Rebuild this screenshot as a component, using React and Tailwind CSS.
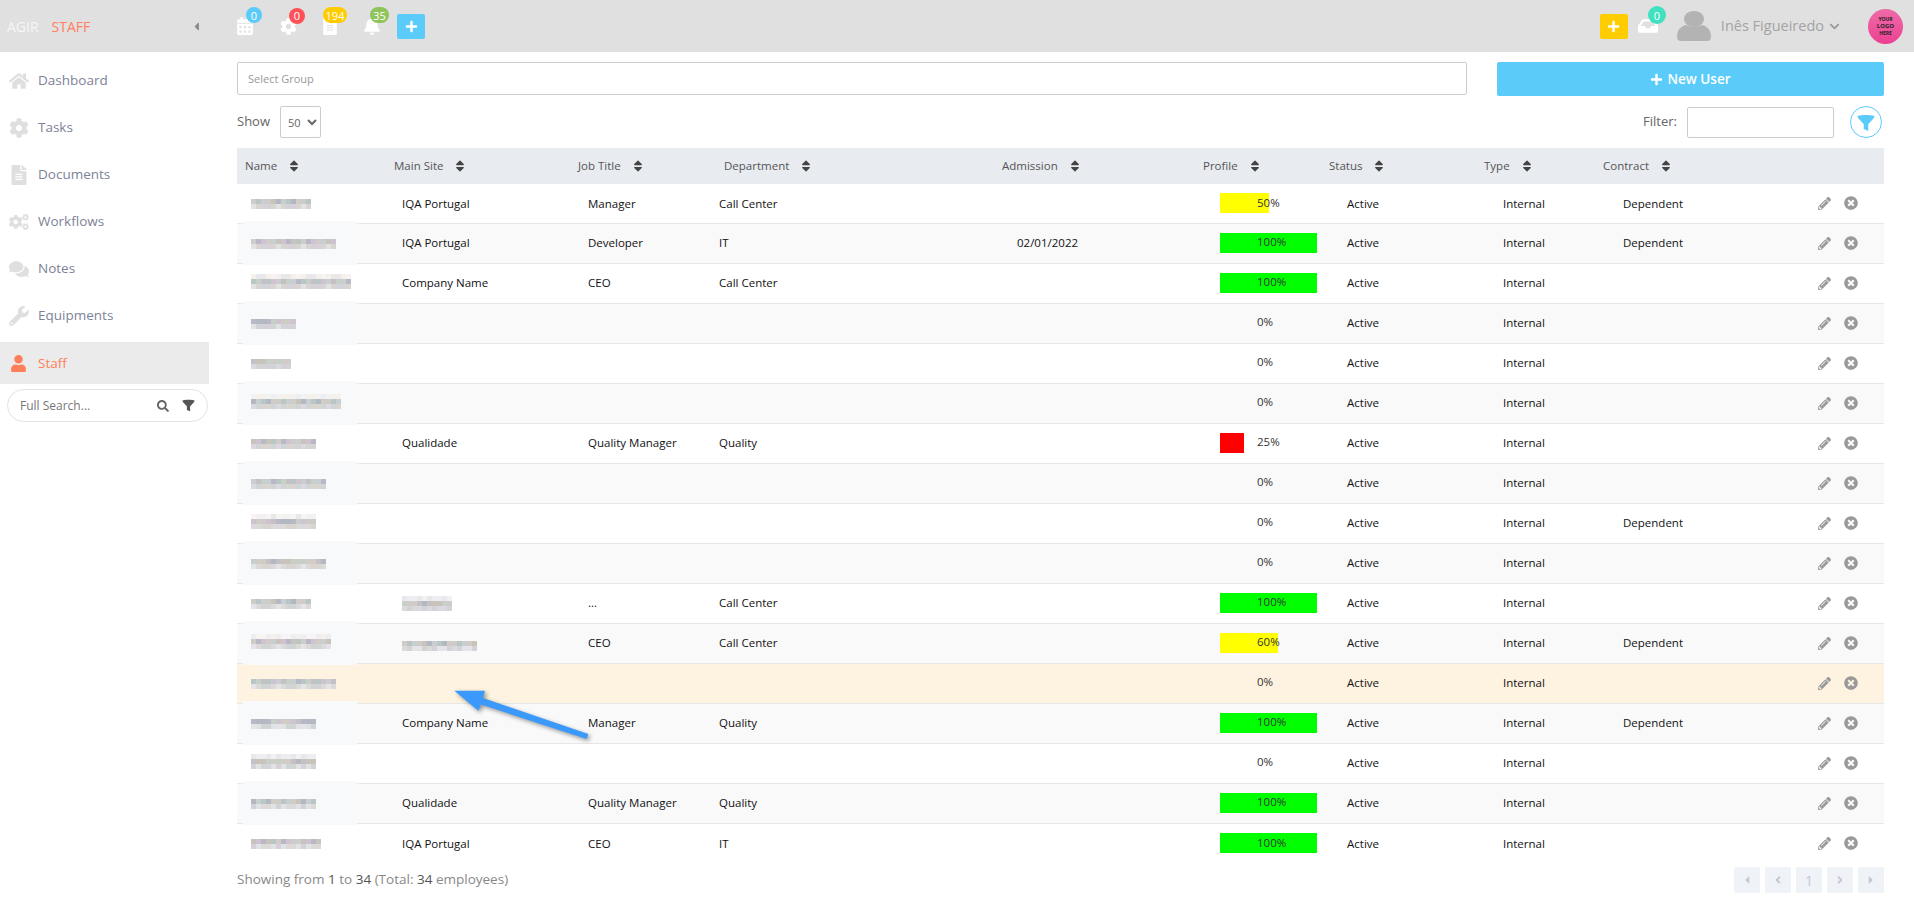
import {
    FaHome, FaCog, FaFileAlt, FaCogs, FaComments, FaWrench, FaUser, FaSearch,
    FaCaretLeft, FaCaretRight, FaAngleLeft, FaAngleRight, FaCalendarAlt, FaBell, FaPlus,
    FaInbox, FaChevronDown, FaSort, FaPencilAlt, FaTimesCircle,
} from 'react-icons/fa';

const font = { fontFamily: '"Open Sans", "Noto Sans", sans-serif' };

const navItems = [
    { label: 'Dashboard', icon: FaHome },
    { label: 'Tasks', icon: FaCog },
    { label: 'Documents', icon: FaFileAlt },
    { label: 'Workflows', icon: FaCogs },
    { label: 'Notes', icon: FaComments },
    { label: 'Equipments', icon: FaWrench },
];

const columns = [
    { label: 'Name', col: 'w-[149px]' },
    { label: 'Main Site', col: 'w-[184px]' },
    { label: 'Job Title', col: 'w-[146px]' },
    { label: 'Department', col: 'w-[278px]' },
    { label: 'Admission', col: 'w-[201px]' },
    { label: 'Profile', col: 'w-[126px]' },
    { label: 'Status', col: 'w-[155px]' },
    { label: 'Type', col: 'w-[119px]' },
    { label: 'Contract', col: 'w-[205px]' },
    { label: '', col: 'w-[84px]' },
];

const rows = [
    { name: 60, site: 'IQA Portugal', job: 'Manager', dept: 'Call Center', profile: 50, contract: 'Dependent' },
    { name: 85, site: 'IQA Portugal', job: 'Developer', dept: 'IT', date: '02/01/2022', profile: 100, contract: 'Dependent' },
    { name: 100, site: 'Company Name', job: 'CEO', dept: 'Call Center', profile: 100 },
    { name: 45, profile: 0 },
    { name: 40, profile: 0 },
    { name: 90, profile: 0 },
    { name: 65, site: 'Qualidade', job: 'Quality Manager', dept: 'Quality', profile: 25 },
    { name: 75, profile: 0 },
    { name: 65, profile: 0, contract: 'Dependent' },
    { name: 75, profile: 0 },
    { name: 60, blurSite: 50, job: '...', dept: 'Call Center', profile: 100 },
    { name: 80, blurSite: 75, job: 'CEO', dept: 'Call Center', profile: 60, contract: 'Dependent' },
    { name: 85, profile: 0, highlight: true },
    { name: 65, site: 'Company Name', job: 'Manager', dept: 'Quality', profile: 100, contract: 'Dependent' },
    { name: 65, profile: 0 },
    { name: 65, site: 'Qualidade', job: 'Quality Manager', dept: 'Quality', profile: 100 },
    { name: 70, site: 'IQA Portugal', job: 'CEO', dept: 'IT', profile: 100 },
];

const midTones = ['#cfcbc6', '#c4c0c4', '#b9b8c6', '#c9cfd0', '#d2ccc8', '#b4b8c2', '#c6cfc8', '#cfc3d2', '#b8c6c6', '#c8c4bc'];
const lowTones = ['#dcdad8', '#d4d2d8', '#e0e2e4', '#d8d4d0', '#dcd8e0', '#d0d4d4', '#e4e4e8'];
const topTones = ['#f6f0ea', '#eceef2', '#f2f2f2', '#e8e8ea', '#f8f4f4'];

// pixelated stand-in for a blurred out name
function Mosaic({ width, seed }) {
    const cols = Math.round(width / 5);
    const pick = (list, i, k) => list[(i * 7 + seed * 13 + k * 3 + ((i * i + seed) % 5)) % list.length];
    return (
        <svg width={width} height={15} className="block" shapeRendering="crispEdges">
            {Array.from({ length: cols }).map((_, i) => (
                <g key={i}>
                    {(i * 3 + seed) % 3 === 0 && <rect x={i * 5} y={0} width={5} height={5} fill={pick(topTones, i, 1)} />}
                    <rect x={i * 5} y={5} width={5} height={5} fill={pick(midTones, i, 2)} />
                    <rect x={i * 5} y={10} width={5} height={5} fill={pick(lowTones, i, 3)} />
                </g>
            ))}
        </svg>
    );
}

function Funnel({ className }) {
    return (
        <svg viewBox="0 0 16 16" className={className} fill="currentColor">
            <path d="M0.5 2.2C0.5 0.4 15.5 0.4 15.5 2.2C15.5 3 15 3.6 14.4 4.2L10 9V15.2L6 13.4V9L1.6 4.2C1 3.6 0.5 3 0.5 2.2Z" />
        </svg>
    );
}

function Avatar() {
    return (
        <svg width="34" height="30" viewBox="0 0 34 30" fill="#b3b3b3">
            <ellipse cx="17" cy="8" rx="10" ry="8" />
            <path d="M0 26C0 18 5 14.5 9.5 14C12 16 22 16 24.5 14C29 14.5 34 18 34 26C34 28.5 32.5 30 30 30H4C1.500 30 0 28.500 0 26Z" />
        </svg>
    );
}

function Badge({ value, color, className }) {
    return (
        <span className={`absolute -top-[10px] flex h-4 items-center justify-center rounded-full text-[11px] leading-none text-white ${color} ${className}`}>
            {value}
        </span>
    );
}

function TopIcon({ icon: Icon, size, badge, color, badgeClass, wrap }) {
    return (
        <div className={`relative flex items-center ${wrap}`}>
            <Icon className="text-white" style={{ fontSize: size }} />
            <Badge value={badge} color={color} className={badgeClass} />
        </div>
    );
}

function SquarePlus({ color }) {
    return (
        <button className={`flex h-[25px] w-[28px] items-center justify-center rounded-[2px] text-white ${color}`}>
            <FaPlus className="text-[13px]" />
        </button>
    );
}

function ProfileBar({ value }) {
    const color = value === 100 ? 'bg-[#00ff00]' : value >= 50 ? 'bg-[#ffff00]' : 'bg-[#ff0000]';
    return (
        <div className="grid w-[97px] grid-cols-1 items-center">
            {value > 0 && <div className={`col-start-1 row-start-1 h-5 ${color}`} style={{ width: `${value * 0.97}px` }}></div>}
            <span className="col-start-1 row-start-1 -mt-[2px] pl-[37px] text-[#333]">{value}%</span>
        </div>
    );
}

function Pager({ children }) {
    return <div className="flex h-[26px] w-[26px] items-center justify-center rounded-[2px] bg-[#eff2f6] text-[#c2c7d0]">{children}</div>;
}

export default function App() {
    return (
        <div className="relative h-[897px] overflow-hidden bg-white" style={font}>
            {/* Top bar */}
            <header className="flex h-[52px] items-center bg-[#e0e0e0]">
                <div className="flex w-[209px] items-center pl-[7px] pr-[6px] text-[14px]">
                    <span className="text-[#f7f7f7]">AGIR</span>
                    <span className="ml-[13px] text-[#ff7f60]">STAFF</span>
                    <FaCaretLeft className="ml-auto text-[13px] text-[#8a8a8a]" />
                </div>
                <div className="flex items-center pl-[27px]">
                    <TopIcon icon={FaCalendarAlt} size={18} badge="0" color="bg-[#5bcbf9] w-4" badgeClass="left-[10px]" wrap="w-[44px]" />
                    <TopIcon icon={FaCog} size={17} badge="0" color="bg-[#ff5257] w-4" badgeClass="left-[9px]" wrap="w-[41px]" />
                    <TopIcon icon={FaFileAlt} size={18} badge="194" color="bg-[#ffcc00] w-6" badgeClass="left-[2px]" wrap="w-[42px]" />
                    <TopIcon icon={FaBell} size={18} badge="35" color="bg-[#8fc45a] w-[19px]" badgeClass="left-[7px]" wrap="w-[34px]" />
                    <SquarePlus color="bg-[#5bcbf9]" />
                </div>
                <div className="ml-auto flex items-center pr-[11px]">
                    <SquarePlus color="bg-[#ffcc00]" />
                    <TopIcon icon={FaInbox} size={20} badge="0" color="bg-[#40e0c0] w-[18px] h-[18px]" badgeClass="left-[10px]" wrap="ml-[10px] w-[39px]" />
                    <Avatar />
                    <span className="ml-[10px] text-[14.5px] text-[#a3a3a3]">Inês Figueiredo</span>
                    <FaChevronDown className="ml-[5px] text-[11px] text-[#999]" />
                    <div className="ml-[28px] flex h-[35px] w-[35px] flex-col items-center justify-center rounded-full bg-gradient-to-b from-[#ee6aa8] to-[#ec3f93] text-[5px] font-bold leading-[7px] text-[#222]">
                        <span>YOUR</span>
                        <span className="text-[6px]">LOGO</span>
                        <span>HERE</span>
                    </div>
                </div>
            </header>

            <div className="flex">
                {/* Sidebar */}
                <aside className="w-[209px] shrink-0 pt-[5px]">
                    {navItems.map((item) => (
                        <div key={item.label} className="flex h-[47px] items-center text-[13.5px] text-[#7d8298]">
                            <div className="flex w-[38px] justify-center pr-[1px]">
                                <item.icon className="text-[20px] text-[#dfdfdf]" />
                            </div>
                            <span>{item.label}</span>
                        </div>
                    ))}
                    <div className="mt-[3px] flex h-[42px] items-center bg-[#ebebeb] text-[13.5px] text-[#ff7f5c]">
                        <div className="flex w-[38px] justify-center pr-[2px]">
                            <FaUser className="text-[17px]" />
                        </div>
                        <span>Staff</span>
                    </div>
                    <div className="ml-[7px] mt-[5px] flex h-[33px] w-[201px] items-center rounded-full border border-[#e2e2e2] pl-[12px] pr-[12px] text-[12px] text-[#777]">
                        <span>Full Search...</span>
                        <FaSearch className="ml-auto text-[12px] text-[#666]" />
                        <Funnel className="ml-[13px] h-[13px] w-[13px] text-[#555]" />
                    </div>
                </aside>

                {/* Main content */}
                <main className="min-w-0 flex-1 pl-[28px] pr-[30px] pt-[10px]">
                    <div className="flex items-start">
                        <input
                            placeholder="Select Group"
                            className="h-[33px] w-[1230px] rounded-[2px] border border-[#cccccc] px-[10px] text-[11px] placeholder:text-[#999]"
                        />
                        <button className="ml-auto flex h-[34px] w-[387px] items-center justify-center gap-[4px] rounded-[2px] bg-[#5bcbf9] text-[13.5px] font-semibold text-white">
                            <FaPlus className="text-[13px]" />
                            New User
                        </button>
                    </div>

                    <div className="mt-[10px] flex h-[32px] items-center text-[13px] text-[#666]">
                        <span>Show</span>
                        <select className="ml-[10px] h-[32px] w-[41px] rounded-[2px] border border-[#cccccc] pl-[3px] text-[11px] text-[#666]">
                            <option>50</option>
                        </select>
                        <span className="ml-auto">Filter:</span>
                        <input className="ml-[10px] h-[31px] w-[147px] rounded-[2px] border border-[#cccccc]" />
                        <div className="ml-[16px] mr-[2px] flex h-[32px] w-[32px] items-center justify-center rounded-full border border-[#5bcbf9] text-[#5bcbf9]">
                            <Funnel className="mt-[1px] h-[18px] w-[18px]" />
                        </div>
                    </div>

                    <table className="mt-[10px] w-full table-fixed border-collapse text-[11.5px] text-[#111]">
                        <colgroup>
                            {columns.map((c, i) => <col key={i} className={c.col} />)}
                        </colgroup>
                        <thead>
                            <tr className="h-[36px] bg-[#e8ebf0] text-[#555]">
                                {columns.map((c, i) => (
                                    <th key={i} className="pl-2 text-left font-normal">
                                        {c.label && (
                                            <div className="flex items-center gap-[10px]">
                                                <span>{c.label}</span>
                                                <FaSort className="text-[14px] text-[#444]" />
                                            </div>
                                        )}
                                    </th>
                                ))}
                            </tr>
                        </thead>
                        <tbody>
                            {rows.map((r, i) => (
                                <tr
                                    key={i}
                                    className={`${i > 0 ? 'h-10 border-t border-[#e7e7e7]' : 'h-[39px]'} ${r.highlight ? 'bg-[#fef3e0]' : i % 2 === 1 ? 'bg-[#f9f9f9]' : 'bg-white'}`}
                                >
                                    <td className="relative pl-[14px]">
                                        {i % 2 === 1 && !r.highlight && (
                                            <div className="absolute -bottom-[2px] -top-[3px] left-[6px] w-[114px] bg-[#f8f9fb]"></div>
                                        )}
                                        <div className="relative -mt-[3px]"><Mosaic width={r.name} seed={i + 1} /></div>
                                    </td>
                                    <td className="pl-[16px]">
                                        {r.blurSite ? <Mosaic width={r.blurSite} seed={i + 20} /> : r.site}
                                    </td>
                                    <td className="pl-[18px]">{r.job}</td>
                                    <td className="pl-[3px]">{r.dept}</td>
                                    <td className="pl-[23px]">{r.date}</td>
                                    <td className="pl-[25px]"><ProfileBar value={r.profile} /></td>
                                    <td className="pl-[26px]">Active</td>
                                    <td className="pl-[27px]">Internal</td>
                                    <td className="pl-[28px]">{r.contract}</td>
                                    <td className="pl-[18px]">
                                        <div className="flex items-center gap-[13px] text-[#999]">
                                            <FaPencilAlt className="text-[13px]" />
                                            <FaTimesCircle className="text-[14px]" />
                                        </div>
                                    </td>
                                </tr>
                            ))}
                        </tbody>
                    </table>

                    <div className="mt-[4px] flex h-[26px] items-center text-[13.5px] text-[#888]">
                        <span className="-mt-[2px]">
                            Showing from <span className="text-[#555]">1</span> to <span className="text-[#555]">34</span> (Total: <span className="text-[#555]">34</span> employees)
                        </span>
                        <div className="ml-auto flex gap-[5px] text-[12px]">
                            <Pager><FaCaretLeft /></Pager>
                            <Pager><FaAngleLeft /></Pager>
                            <Pager><span className="text-[14px]">1</span></Pager>
                            <Pager><FaAngleRight /></Pager>
                            <Pager><FaCaretRight /></Pager>
                        </div>
                    </div>
                </main>
            </div>

            {/* Annotation arrow over the highlighted row */}
            <svg className="absolute left-[440px] top-[680px] drop-shadow-[2px_2px_2px_rgba(0,0,0,0.4)]" width="160" height="70">
                <polygon points="14.3,10.7 45,10.7 43,18 148.3,54 146.5,59 41,24.5 38.3,30.7" fill="#3b99fc" />
            </svg>
        </div>
    );
}
